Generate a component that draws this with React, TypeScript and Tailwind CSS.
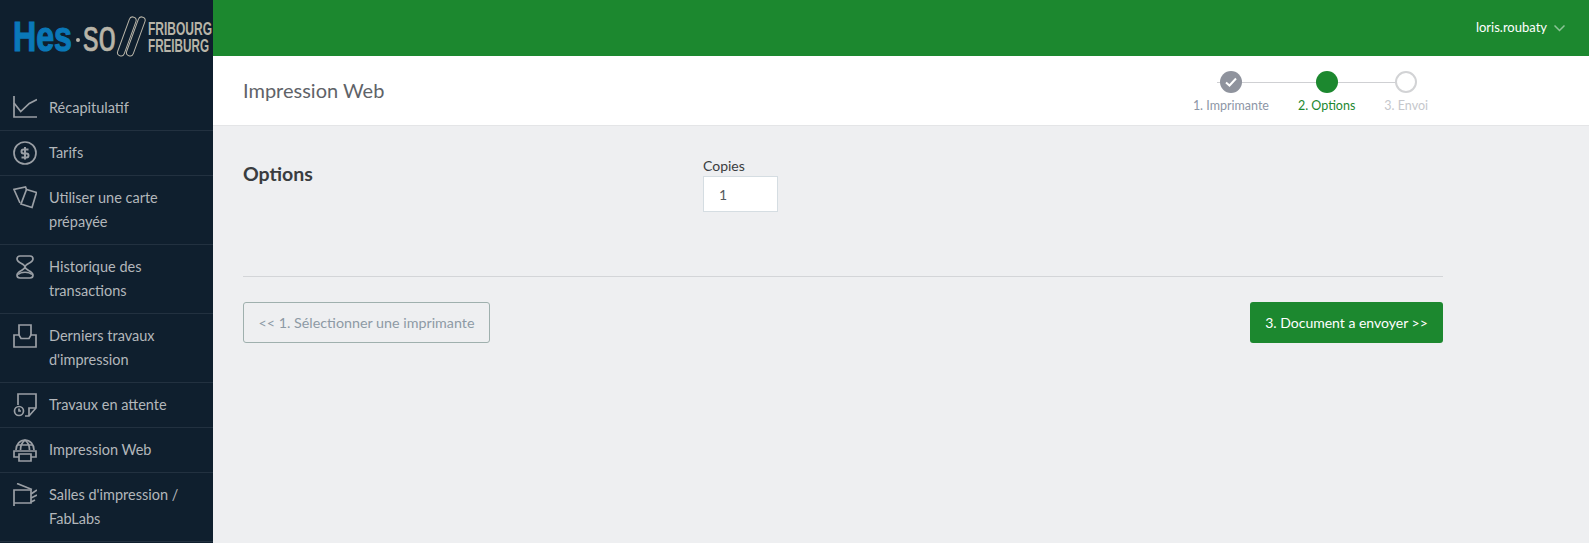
const font = "[font-family:Lato,'Noto_Sans',sans-serif]";

function Icon({ children, className = "" }: { children: React.ReactNode; className?: string }) {
  return (
    <svg
      width="24"
      height="24"
      viewBox="0 0 24 24"
      fill="none"
      stroke="#9a9fa5"
      strokeWidth="1.7"
      className={`shrink-0 ${className}`}
    >
      {children}
    </svg>
  );
}

const menu = [
  {
    label: ["Récapitulatif"],
    icon: (
      <Icon>
        <path d="M1 0V21H24" />
        <path d="M1 7L7.7 15.5L16.3 7.5L24 3.5" />
      </Icon>
    ),
  },
  {
    label: ["Tarifs"],
    icon: (
      <Icon>
        <circle cx="12" cy="12" r="11" />
        <path d="M15.5 8.5H10.5a2 2 0 0 0 0 4h3a2 2 0 0 1 0 4H8.5M12 6v12.5" strokeWidth="2" />
      </Icon>
    ),
  },
  {
    label: ["Utiliser une carte", "prépayée"],
    icon: (
      <Icon>
        <path d="M7 17L1 3.5L12.5 1L13.5 3.5" />
        <path d="M13.5 3.5L23.5 6.5L19 21.5L8 18Z" />
      </Icon>
    ),
  },
  {
    label: ["Historique des", "transactions"],
    icon: (
      <Icon>
        <path d="M7 1h10a3 3 0 0 1 3 3c0 4-8 5-8 8 0-3-8-4-8-8a3 3 0 0 1 3-3Z" />
        <path d="M7 23h10a3 3 0 0 0 3-3c0-4-8-5-8-8 0 3-8 4-8 8a3 3 0 0 0 3 3Z" />
        <path d="M5 19.5C8 16.5 16 16.5 19 19.5" />
      </Icon>
    ),
  },
  {
    label: ["Derniers travaux", "d'impression"],
    icon: (
      <Icon>
        <path d="M6 11V1H18V11" />
        <path d="M1 11H6L8 14.5H16L18 11H23V23H1Z" />
      </Icon>
    ),
  },
  {
    label: ["Travaux en attente"],
    icon: (
      <Icon>
        <path d="M5 12V1H23V15L16 23H12" />
        <path d="M23 15H16V23" />
        <circle cx="6" cy="18" r="4.5" />
        <path d="M6 15.5V18H8" />
      </Icon>
    ),
  },
  {
    label: ["Impression Web"],
    icon: (
      <Icon>
        <path d="M3 12a9 10 0 0 1 18 0" />
        <path d="M12 2C8 5 7.5 8 7.5 12M12 2C16 5 16.5 8 16.5 12M4 7H20" />
        <path d="M6 19H1V13H23V19H18" />
        <path d="M6 16H18V23H6Z" />
      </Icon>
    ),
  },
  {
    label: ["Salles d'impression /", "FabLabs"],
    icon: (
      <Icon>
        <path d="M4 0.5L19 6.5" />
        <path d="M1 23V7H18V20H1" />
        <path d="M18 11L24 7M18 15L24 12M18 19L22 17" />
      </Icon>
    ),
  },
];

function Logo() {
  return (
    <svg width="213" height="86" viewBox="0 0 213 86" className="block">
      <text
        x="13"
        y="51"
        fill="#0a78b8"
        stroke="#0a78b8"
        strokeWidth="1.2"
        fontFamily="Liberation Sans"
        fontWeight="700"
        fontSize="42"
        textLength="59"
        lengthAdjust="spacingAndGlyphs"
      >
        Hes
      </text>
      <circle cx="78" cy="40" r="2" fill="#b8b4a8" />
      <text
        x="83"
        y="51"
        fill="#b8b4a8"
        stroke="#b8b4a8"
        strokeWidth="0.6"
        fontFamily="Liberation Sans"
        fontSize="44"
        textLength="33"
        lengthAdjust="spacingAndGlyphs"
      >
        so
      </text>
      <g fill="none" stroke="#b8b4a8" strokeWidth="1">
        <rect x="-3.5" y="-20" width="7" height="41" rx="3.5" transform="translate(127 36) rotate(20)" />
        <rect x="-3.5" y="-20" width="7" height="41" rx="3.5" transform="translate(136 36) rotate(20)" />
      </g>
      <text
        x="148"
        y="35"
        fill="#b8b4a8"
        fontFamily="Liberation Sans"
        fontWeight="700"
        fontSize="18"
        textLength="64"
        lengthAdjust="spacingAndGlyphs"
      >
        FRIBOURG
      </text>
      <text
        x="148"
        y="52"
        fill="#b8b4a8"
        fontFamily="Liberation Sans"
        fontWeight="700"
        fontSize="18"
        textLength="61"
        lengthAdjust="spacingAndGlyphs"
      >
        FREIBURG
      </text>
    </svg>
  );
}

function Step({ label, className, children }: { label: string; className: string; children: React.ReactNode }) {
  return (
    <div className="flex flex-col items-center relative">
      {children}
      <span className={`text-[12.5px] leading-4 mt-[5px] ${className}`}>{label}</span>
    </div>
  );
}

export default function App() {
  return (
    <div className={`flex h-screen overflow-hidden bg-[#eeeff1] ${font}`}>
      <aside className="w-[213px] shrink-0 bg-[#0f1f2e] text-[#b3b7bb] text-[14.5px]">
        <Logo />
        {menu.map((item) => (
          <div
            key={item.label[0]}
            className="flex gap-3 pl-[13px] pt-[10px] pb-[10px] border-b border-[#223140] leading-6 box-border"
          >
            {item.icon}
            <div>
              {item.label.map((line) => (
                <div key={line}>{line}</div>
              ))}
            </div>
          </div>
        ))}
      </aside>

      <div className="flex-1 flex flex-col min-w-0">
        <div className="h-14 bg-[#1c882f] flex items-center justify-end pr-6 text-white text-[13px]">
          <span>loris.roubaty</span>
          <svg width="11" height="7" viewBox="0 0 11 7" fill="none" stroke="#8cc497" strokeWidth="1.5" className="ml-[7px]">
            <path d="M0.5 0.5L5.5 5.5L10.5 0.5" />
          </svg>
        </div>

        <div className="h-[70px] bg-white border-b border-[#e4e5e7] flex items-center justify-between pl-[30px] pr-[161px]">
          <h1 className="text-xl text-[#5f6368] -mt-0.5">Impression Web</h1>
          <div className="flex gap-[29px] relative pt-[15px] self-start">
            <div className="absolute top-[26px] left-[24px] right-[22px] h-px bg-[#cfd0d3]" />
            <Step label="1. Imprimante" className="text-[#8d96a6]">
              <div className="relative w-[22px] h-[22px] rounded-full bg-[#8f939d] flex items-center justify-center">
                <svg width="12" height="10" viewBox="0 0 12 10" fill="none" stroke="white" strokeWidth="2">
                  <path d="M1 5.5L4.5 8.5L11 1.5" />
                </svg>
              </div>
            </Step>
            <Step label="2. Options" className="text-[#1c882f]">
              <div className="relative w-[22px] h-[22px] rounded-full bg-[#1c882f]" />
            </Step>
            <Step label="3. Envoi" className="text-[#c5c7cc]">
              <div className="relative w-[22px] h-[22px] rounded-full bg-white border-2 border-[#d2d3d5]" />
            </Step>
          </div>
        </div>

        <main className="pl-[30px] w-[1230px]">
          <div className="flex pt-[30px] pb-[58px] border-b border-[#d3d5d8] h-[151px] box-border">
            <h2 className="w-[460px] text-[19.5px] font-bold text-[#3a3d40] pt-[3px]">Options</h2>
            <div>
              <label className="block text-sm leading-[20px] text-[#3a3d40]">Copies</label>
              <input
                readOnly
                value="1"
                className="w-[75px] h-9 bg-white border border-[#d5dde2] pl-[15px] text-sm text-[#555a60] outline-none"
              />
            </div>
          </div>
          <div className="flex justify-between mt-[25px]">
            <button className="w-[247px] h-[41px] border border-[#9fb0ae] rounded-[3px] text-[14.3px] text-[#8d9aa5]">
              &lt;&lt; 1. Sélectionner une imprimante
            </button>
            <button className="w-[193px] h-[41px] bg-[#1c882f] rounded-[3px] text-sm text-white">
              3. Document a envoyer &gt;&gt;
            </button>
          </div>
        </main>
      </div>
    </div>
  );
}
